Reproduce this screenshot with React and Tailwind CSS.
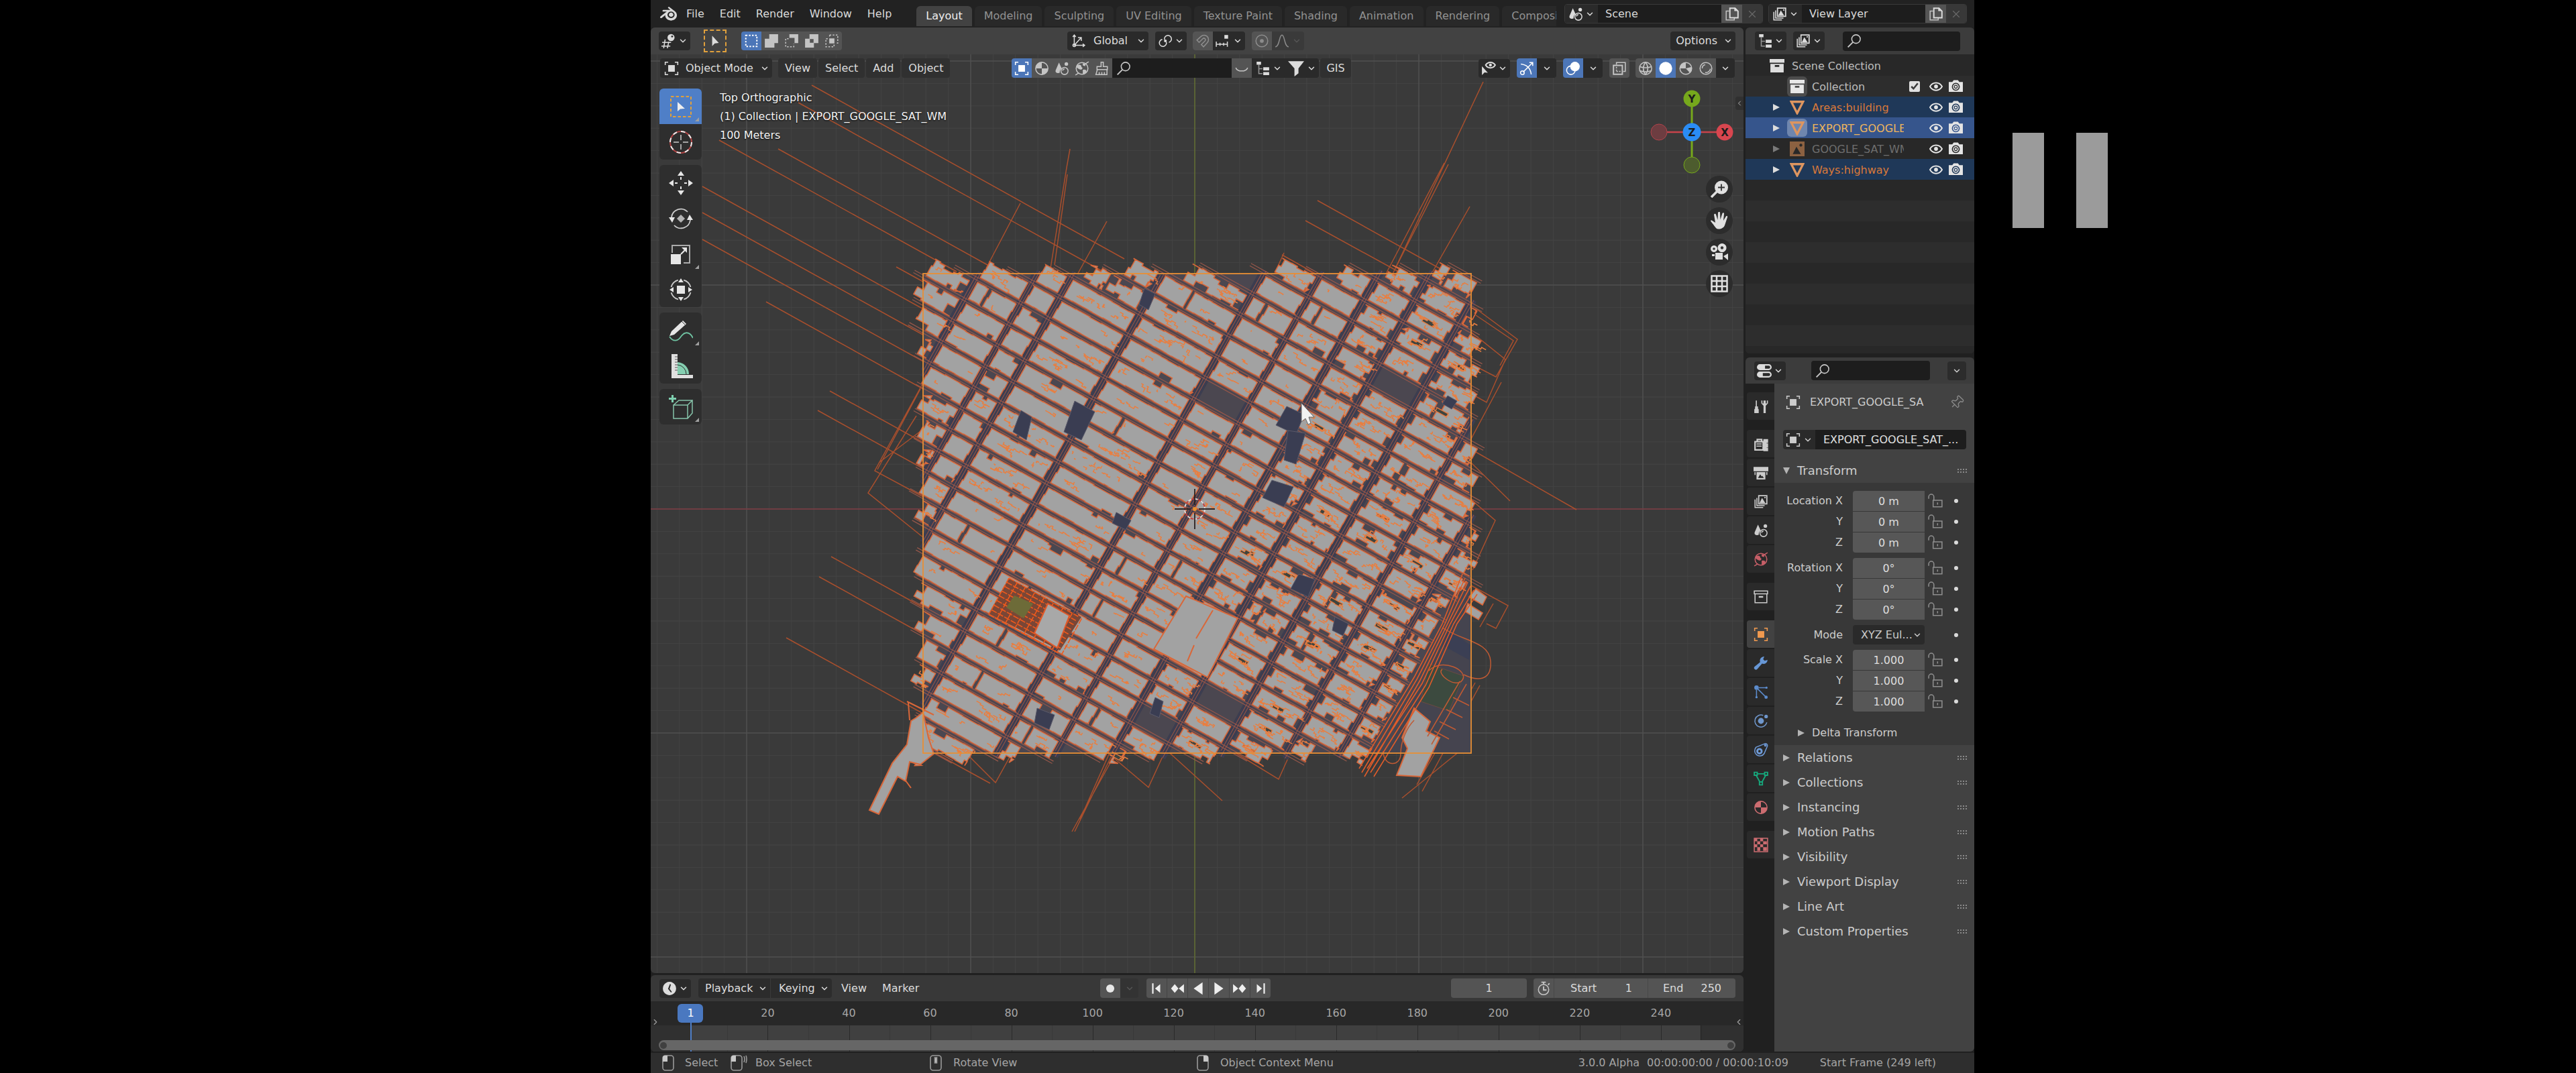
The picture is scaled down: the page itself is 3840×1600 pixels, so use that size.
import { useMemo, useState } from "react";
import { ChevronDown, ChevronLeft, ChevronRight, X, Pin } from "lucide-react";
import { SiBlender } from "react-icons/si";

const Svg = ({ size = 22, className = "", children }) => (
  <svg
    width={size}
    height={size}
    viewBox="0 0 20 20"
    fill="none"
    stroke="currentColor"
    strokeWidth="1.4"
    className={`shrink-0 ${className}`}
    aria-hidden="true"
  >
    {children}
  </svg>
);

const SOLID = { fill: "currentColor", stroke: "none" };

const icons = {
  editor3d: (
    <>
      <path d="M1 12h12M0 17h12M5 8 3 20M10 11 8 20" />
      <circle cx="13" cy="5.5" r="4.8" {...SOLID} />
      <circle cx="14.5" cy="4" r="1.3" fill="#2a2a2a" stroke="none" />
    </>
  ),
  cursorArrow: <path d="M6 3v14l3.5-3.5 5.5-.8z" {...SOLID} />,
  modeSet: <rect x="2.5" y="2.5" width="15" height="15" strokeDasharray="2.2 2" strokeWidth="1.8" />,
  modeExtend: <path d="M7 1h12v12h-5v6H1V7h6z" {...SOLID} />,
  modeSubtract: (
    <>
      <path d="M7 1h12v12h-5V6H7z" {...SOLID} />
      <path d="M6 7H2v11h11v-4" strokeDasharray="2.2 2" />
    </>
  ),
  modeInvert: <path d="M7 1h12v12h-6v6H1V7h6zM7.500 7.500v5h5v-5z" fillRule="evenodd" {...SOLID} />,
  modeIntersect: (
    <>
      <path d="M6.500 6.500h7v7h-7z" {...SOLID} />
      <path d="M7 2h11v11h-3M13 15v3H2V7h3M7 2v3" strokeDasharray="2.2 2" />
    </>
  ),
  axes: (
    <>
      <path d="M4 2v14h14M4 16 13 6M2 4.500 4 2l2 2.500M15.500 14l2.500 2-2.500 2M9 5.500h4.500V10" />
      <circle cx="4" cy="16" r="1.8" />
    </>
  ),
  pivot: (
    <>
      <path d="M9 8.500A4.800 4.800 0 1 1 15 12" />
      <path d="M11.500 11.500A4.800 4.800 0 1 1 6 8" />
      <circle cx="10.200" cy="10" r="1.9" {...SOLID} />
    </>
  ),
  magnet: <path d="M2 9 7.500 4a6 6 0 0 1 8.500 8.500L11 18l-3-3 5-5a2 2 0 0 0-3-3l-5 5z" />,
  snapIncrement: (
    <>
      <path d="M1 11v7M6 12.500v4M11 12.500v4M16 11v7M1 14.500h15" />
      <rect x="12" y="2" width="5" height="5" {...SOLID} />
    </>
  ),
  proportional: (
    <>
      <circle cx="10" cy="10" r="8" />
      <circle cx="10" cy="10" r="2.600" {...SOLID} />
    </>
  ),
  falloff: <path d="M1 18c6 0 5-16 9-16s3 16 9 16" />,
  object: (
    <>
      <rect x="5.500" y="5.500" width="9" height="9" {...SOLID} />
      <path d="M1.500 5.500v-4h4M14.500 1.500h4v4M18.500 14.500v4h-4M5.500 18.500h-4v-4" />
    </>
  ),
  material: (
    <>
      <circle cx="10" cy="10" r="8.300" />
      <path d="M10 1.700V10H1.700A8.300 8.300 0 0 1 10 1.700zM10 18.300V10h8.300A8.300 8.300 0 0 1 10 18.300z" {...SOLID} />
    </>
  ),
  scene: (
    <>
      <path d="M6 2 1.500 12.500c-1 3.500 3 4.500 5.500 3.500 0-3 1-5 2.700-6z" {...SOLID} />
      <circle cx="13.500" cy="13.500" r="4.800" />
      <path d="M11 13a2.800 2.800 0 0 1 2.500-2.300" />
      <circle cx="16" cy="4" r="2.400" {...SOLID} />
    </>
  ),
  world: (
    <>
      <circle cx="10" cy="10" r="8" />
      <path d="M3 6c3-2 6-1 6 1s2 1 1.500 3S7 12 6 11s-3-1-3.500-3zM11 12c3-1 5 0 5 2s-3 4-5 3zM11 3l4 1-1 3-3-1z" {...SOLID} />
      <path d="m14 4 5-3M6 16l-5 3" />
    </>
  ),
  brush: <path d="M8.500 1.500h3v6h5.500v4H3v-4h5.500zM3.500 11.500 1.500 18.500h15v-7M6 18v-3M9.500 18v-3M13 18v-3" />,
  search: (
    <>
      <circle cx="12.500" cy="7.500" r="5.800" />
      <path d="M8.300 11.700 1.500 18.500" strokeWidth="1.800" />
    </>
  ),
  smile: <path d="M2 9c2 6 14 6 16 0" />,
  tree: (
    <>
      <path d="M2 1h6v4H2zM11 8.500h8v4.200h-8zM11 15h8v4.200h-8z" {...SOLID} />
      <path d="M5 5v12h5M5 10.500h5" opacity=".6" />
    </>
  ),
  funnel: <path d="M0 1h20l-7 9v6l-5 4V10z" {...SOLID} />,
  visibility: (
    <>
      <path d="M6 5.500c3-5 10-5 13 0-3 5-10 5-13 0z" strokeWidth="1.800" />
      <circle cx="12.500" cy="5.500" r="2" {...SOLID} />
      <path d="M1 7v12l3.500-3.500 4.500.5z" {...SOLID} />
    </>
  ),
  gizmo: (
    <>
      <path d="M2 4c8 1 13 6 14 14M5 15 18 2M13.500 2H18v4.500" />
      <circle cx="4" cy="16" r="2.500" />
    </>
  ),
  overlays: (
    <>
      <circle cx="12.500" cy="7.500" r="6.500" {...SOLID} />
      <circle cx="7" cy="12.500" r="5.800" />
    </>
  ),
  xray: (
    <>
      <path d="M6 5V2h12v12h-3" />
      <path d="M2 6h12v12H2z" strokeWidth="1.800" />
      <path d="M6 8v7M6 14h6" strokeDasharray="2 1.5" />
    </>
  ),
  wire: (
    <>
      <circle cx="10" cy="10" r="8.300" />
      <path d="M1.700 7.500c5 2 11.600 2 16.600 0M1.700 13c5 2 11.600 2 16.600 0M10 1.700c-4 5-4 11.600 0 16.600M10 1.700c4 5 4 11.600 0 16.600" />
    </>
  ),
  solid: <circle cx="10" cy="10" r="8.800" {...SOLID} />,
  preview: (
    <>
      <circle cx="10" cy="10" r="8" />
      <path d="M10 10H2a8 8 0 0 1 8-8zM10 10l5.500 6A8 8 0 0 0 18 8z" {...SOLID} />
    </>
  ),
  rendered: (
    <>
      <circle cx="10" cy="10" r="8" />
      <path d="M5 10a5 5 0 0 1 4-5M9 15.500c3 1 7-2 7-5" />
    </>
  ),
  duplicate: (
    <>
      <path d="M6 6H2v12h11v-3" opacity=".8" />
      <path d="M7 2h7l4 4v9H7z" strokeWidth="1.800" />
      <path d="M13 1.500h1.500L18.500 6H13z" {...SOLID} />
    </>
  ),
  layers: (
    <>
      <path d="M7 2h11v11H7z" strokeWidth="1.600" />
      <path d="m8 12 3.500-7L16 12z" {...SOLID} />
      <circle cx="15.500" cy="4.500" r="1" {...SOLID} />
      <path d="M4.500 5v10.500H15M2 7v11h11" />
    </>
  ),
  collection: (
    <path d="M0 1h20v5H0zM1 7.500h18V19H1zM7 9v2.500h6V9z" fillRule="evenodd" {...SOLID} />
  ),
  collectionOutline: (
    <>
      <path d="M1 2h18v4H1zM2 6v12h16V6" />
      <path d="M7 10h6" strokeWidth="2.200" />
    </>
  ),
  mesh: <path d="M2 2.500h16L10 18z" strokeWidth="3" />,
  image: <path d="M0 0h20v20H0zM4 17h11L9 7zM15 3a2 2 0 1 0 .01 0z" fillRule="evenodd" {...SOLID} />,
  eye: (
    <>
      <path d="M1 10c4-7.500 14-7.500 18 0-4 7.500-14 7.500-18 0z" strokeWidth="2" />
      <circle cx="10" cy="10" r="2.900" {...SOLID} />
    </>
  ),
  camera: (
    <>
      <path d="M0 4h5l2-2.500h6L15 4h5v14H0zM10 5.200a5.600 5.600 0 1 0 .01 0z" fillRule="evenodd" {...SOLID} />
      <circle cx="10" cy="10.800" r="3.400" />
      <circle cx="10" cy="10.800" r="1.500" {...SOLID} />
    </>
  ),
  properties: (
    <path d="M4 1h12a4 4 0 0 1 0 8H4a4 4 0 0 1 0-8zM11 3v4h5a2 2 0 0 0 0-4zM4 11h12a4 4 0 0 1 0 8H4a4 4 0 0 1 0-8zM8 13v4h8a2 2 0 0 0 0-4z" fillRule="evenodd" {...SOLID} />
  ),
  tool: (
    <>
      <path d="M3 2h1.500v8H6v3l1 1v5H1v-5l1-1v-3h1z" {...SOLID} />
      <path d="M10.500 2v4l3 3v10h3V9l3-3V2h-1.500v4h-1.500V2h-3v4H12V2z" {...SOLID} />
    </>
  ),
  render: (
    <>
      <path d="M2 7h11v11H2zM5 7V4h6v3" strokeWidth="2" />
      <path d="M14 4h5v4h-2v2h2v4h-2v2h2v3h-5zM4 10h7M4 13h7" fill="currentColor" />
    </>
  ),
  output: (
    <>
      <path d="M0 2h20v6H0zM4 9h12v10H4zM6 17l3-5 2 3 1-1 2 3z" fillRule="evenodd" {...SOLID} />
      <path d="M2 9v4M18 9v4" />
    </>
  ),
  wrench: (
    <path d="M19 5.500a5.500 5.500 0 0 1-7.500 5L5 18a2.400 2.400 0 0 1-3.500-3.500L9 8.500A5.500 5.500 0 0 1 14.500 1L13 4.500l2 2z" {...SOLID} />
  ),
  particles: (
    <>
      <circle cx="4" cy="4" r="3" {...SOLID} />
      <path d="M7 4h10M4 7v10M6 6l11 11" />
      <circle cx="17.500" cy="4" r="1.500" {...SOLID} />
      <circle cx="4" cy="17" r="1.500" {...SOLID} />
      <circle cx="17" cy="17" r="2.200" {...SOLID} />
    </>
  ),
  physics: (
    <>
      <circle cx="10" cy="10" r="4" {...SOLID} />
      <path d="M13 2.500A8.200 8.200 0 1 0 18 12" />
      <circle cx="17" cy="4" r="2.400" {...SOLID} />
    </>
  ),
  constraint: (
    <>
      <circle cx="8" cy="12" r="3" strokeWidth="2.600" />
      <path d="M3.500 6.500 16 1.500c3 0 3 3 2.500 4L14.500 15a7 7 0 1 1-11-8.500z" />
      <circle cx="16" cy="4" r="1" />
    </>
  ),
  meshData: (
    <path d="M1 1.500h4v4H1zM15 1.500h4v4h-4zM8 14.500h4v4H8zM5 3.500h10M3.500 5.500l5 9M16.500 5.500l-5 9" strokeWidth="1.700" />
  ),
  texture: (
    <>
      <path d="M1 1h18v18H1z" />
      <path d="M1 1h4v4H1zM9 1h4v4H9zM5 5h4v4H5zM13 5h5v4h-5zM1 9h4v4H1zM9 9h4v4H9zM5 13h4v5H5zM13 13h5v5h-5z" {...SOLID} />
    </>
  ),
  lock: (
    <>
      <path d="M7 9h12v9H7z" />
      <path d="M1 7V4.500a3.500 3.500 0 0 1 7 0V9M13 12v3" />
    </>
  ),
  clock: (
    <path d="M10 1a9 9 0 1 1-.01 0zM10.500 4 8 10.500l4 5 1.200-1-3-4L12 4.500z" fillRule="evenodd" {...SOLID} />
  ),
  record: <circle cx="10" cy="10" r="5.500" {...SOLID} />,
  jumpStart: <path d="M4 3h2v14H4zM15 4v12l-7-6z" {...SOLID} />,
  prevKey: <path d="M6.500 4l5 6-5 6-5-6zM19 4v12l-7-6z" {...SOLID} />,
  playBack: <path d="M16 1.500v17L4 10z" {...SOLID} />,
  play: <path d="M4 1.500v17L16 10z" {...SOLID} />,
  nextKey: <path d="M13.500 4l5 6-5 6-5-6zM1 4v12l7-6z" {...SOLID} />,
  jumpEnd: <path d="M14 3h2v14h-2zM5 4v12l7-6z" {...SOLID} />,
  stopwatch: (
    <>
      <circle cx="10" cy="11.500" r="7" />
      <path d="M10 7v5h4M10 1v3M7 1.500h6M16 5l2-2" strokeWidth="1.700" />
    </>
  ),
};

const Icon = ({ name, size, className }) => (
  <Svg size={size} className={className}>
    {icons[name]}
  </Svg>
);

const Chevron = ({ className = "" }) => (
  <ChevronDown size={14} strokeWidth={2.5} className={`shrink-0 ${className}`} />
);

const IconDrop = ({ icon, label, className = "" }) => (
  <button
    aria-label={label}
    className={`flex h-7 w-[47px] shrink-0 items-center justify-center gap-[3px] rounded bg-[#2a2a2a] text-[#dcdcdc] ${className}`}
  >
    <Icon name={icon} />
    <Chevron />
  </button>
);

const IconCell = ({ icon, label, active, className = "" }) => (
  <button
    aria-label={label}
    className={`flex h-full w-[30px] shrink-0 items-center justify-center ${
      active ? "bg-[#4c76b8] text-white" : "bg-[#545454] text-[#c4c4c4]"
    } ${className}`}
  >
    <Icon name={icon} />
  </button>
);

const SearchBox = ({ label, className = "" }) => (
  <label className={`flex h-[29px] items-center gap-2 bg-[#1d1d1d] px-[6px] text-[#c8c8c8] ${className}`}>
    <Icon name="search" />
    <input type="search" aria-label={label} className="w-full min-w-0 bg-transparent outline-none" />
  </label>
);

/* ---------- top bar ---------- */

const menus = ["File", "Edit", "Render", "Window", "Help"];
const workspaces = [
  "Layout", "Modeling", "Sculpting", "UV Editing", "Texture Paint",
  "Shading", "Animation", "Rendering", "Compositing",
];

const DataBlock = ({ icon, value, label }) => (
  <div className="flex h-[29px] shrink-0 overflow-hidden rounded border border-[#3a3a3a]">
    <button aria-label={`Browse ${label}`} className="flex w-[49px] items-center justify-center gap-[3px] bg-[#2a2a2a]">
      <Icon name={icon} />
      <Chevron />
    </button>
    <input
      aria-label={label}
      defaultValue={value}
      className="w-[184px] bg-[#1d1d1d] px-[11px] text-[#d8d8d8] outline-none"
    />
    <button aria-label={`New ${label}`} className="flex w-[31px] items-center justify-center bg-[#545454]">
      <Icon name="duplicate" />
    </button>
    <button aria-label={`Remove ${label}`} className="flex w-[30px] items-center justify-center bg-[#383838] text-[#6a6a6a]">
      <X size={18} strokeWidth={1.5} />
    </button>
  </div>
);

const TopBar = () => {
  const [workspace, setWorkspace] = useState("Layout");

  return (
    <header className="flex h-[41px] shrink-0 items-center bg-[#222222] pr-[11px] pl-[14px] text-[#dadada]">
      <SiBlender size={25} className="shrink-0" />
      <nav className="ml-[14px] flex gap-[23px]">
        {menus.map((m) => (
          <button key={m}>{m}</button>
        ))}
      </nav>
      <div className="mr-3 ml-[37px] flex min-w-0 flex-1 items-end gap-1 self-stretch overflow-hidden pt-[9px] pb-[2px]">
        {workspaces.map((w) => (
          <button
            key={w}
            onClick={() => setWorkspace(w)}
            className={`h-full shrink-0 rounded-t-md px-[14px] ${
              w === workspace ? "bg-[#424242] text-[#eeeeee]" : "bg-[#292929] text-[#929292]"
            }`}
          >
            {w}
          </button>
        ))}
      </div>
      <div className="flex gap-2">
        <DataBlock icon="scene" value="Scene" label="scene" />
        <DataBlock icon="layers" value="View Layer" label="view layer" />
      </div>
    </header>
  );
};

/* ---------- viewport headers ---------- */

const selectModes = ["modeSet", "modeExtend", "modeSubtract", "modeInvert", "modeIntersect"];

const ToolHeader = () => (
  <div className="flex h-10 shrink-0 items-center rounded-t-md bg-[#424242] px-3 text-[#dcdcdc]">
    <IconDrop icon="editor3d" label="Editor type" />
    <button aria-label="Select tool" className="ml-[20px] flex h-[34px] w-[34px] items-center justify-center border-2 border-dashed border-[#e0a03c]">
      <Icon name="cursorArrow" />
    </button>
    <div className="ml-[22px] flex h-7 overflow-hidden rounded">
      {selectModes.map((m, i) => (
        <IconCell key={m} icon={m} label={m} active={i === 0} />
      ))}
    </div>
    <label className="ml-[336px] flex h-7 w-[121px] items-center rounded bg-[#2a2a2a] pr-1 pl-[6px]">
      <Icon name="axes" />
      <select aria-label="Transform orientation" className="ml-[11px] w-full min-w-0 appearance-none bg-transparent outline-none">
        <option>Global</option>
      </select>
      <Chevron />
    </label>
    <IconDrop icon="pivot" label="Pivot point" className="ml-[10px]" />
    <div className="ml-[9px] flex h-7 overflow-hidden rounded bg-[#2a2a2a]">
      <button aria-label="Snap" className="flex w-[30px] items-center justify-center bg-[#545454] text-[#8c8c8c]">
        <Icon name="magnet" />
      </button>
      <button aria-label="Snapping" className="flex w-12 items-center justify-center gap-1">
        <Icon name="snapIncrement" />
        <Chevron />
      </button>
    </div>
    <div className="ml-[10px] flex h-7 overflow-hidden rounded bg-[#3a3a3a] text-[#8c8c8c]">
      <button aria-label="Proportional editing" className="flex w-[30px] items-center justify-center bg-[#545454]">
        <Icon name="proportional" />
      </button>
      <button aria-label="Proportional falloff" className="flex w-12 items-center justify-center gap-1">
        <Icon name="falloff" />
        <Chevron className="text-[#555555]" />
      </button>
    </div>
    <button className="ml-auto flex h-7 w-[97px] items-center justify-end gap-[9px] rounded bg-[#2a2a2a] pr-1">
      Options
      <Chevron />
    </button>
  </div>
);

const ViewHeader = () => (
  <div className="flex h-[41px] items-center pr-[13px] pl-[14px] text-[#dcdcdc]">
    <label className="flex h-[29px] w-[167px] items-center rounded bg-[#2c2c2c] pr-1 pl-[6px]">
      <Icon name="object" />
      <select aria-label="Mode" className="ml-[10px] w-full min-w-0 appearance-none bg-transparent outline-none">
        <option>Object Mode</option>
      </select>
      <Chevron />
    </label>
    <nav className="ml-[9px] flex gap-[2px]">
      {["View", "Select", "Add", "Object"].map((m) => (
        <button key={m} className="h-[29px] rounded bg-[#303030] px-[10px]">
          {m}
        </button>
      ))}
    </nav>
    <div className="ml-[92px] flex h-[29px] overflow-hidden rounded">
      {["object", "material", "scene", "world", "brush"].map((n, i) => (
        <IconCell key={n} icon={n} label={`Filter ${n}`} active={i === 0} />
      ))}
      <SearchBox label="Filter objects" className="w-[178px]" />
      <IconCell icon="smile" label="Invert" className="text-[#8c8c8c]" />
      <button aria-label="Outliner filter" className="flex w-[50px] items-center justify-center gap-1 bg-[#2a2a2a]">
        <Icon name="tree" />
        <Chevron />
      </button>
      <button aria-label="Filter" className="flex w-[50px] items-center justify-center gap-1 bg-[#2a2a2a]">
        <Icon name="funnel" size={24} />
        <Chevron />
      </button>
    </div>
    <button className="ml-[2px] h-[29px] rounded bg-[#303030] px-[9px]">GIS</button>
    <IconDrop icon="visibility" label="Object types" className="ml-auto" />
    {["gizmo", "overlays"].map((n) => (
      <div key={n} className="ml-[10px] flex h-[29px] overflow-hidden rounded bg-[#2a2a2a]">
        <IconCell icon={n} label={n} active />
        <button aria-label={`${n} options`} className="flex w-[29px] items-center justify-center">
          <Chevron />
        </button>
      </div>
    ))}
    <div className="ml-[10px] flex h-[29px] overflow-hidden rounded">
      <IconCell icon="xray" label="X-ray" />
    </div>
    <div className="ml-[9px] flex h-[29px] overflow-hidden rounded bg-[#2a2a2a]">
      {["wire", "solid", "preview", "rendered"].map((n) => (
        <IconCell key={n} icon={n} label={n} active={n === "solid"} />
      ))}
      <button aria-label="Shading options" className="flex w-7 items-center justify-center">
        <Chevron />
      </button>
    </div>
  </div>
);

/* ---------- city drawing ---------- */

const CX = 1781;
const CY = 759;
const COS = Math.cos((29 * Math.PI) / 180);
const SIN = Math.sin((29 * Math.PI) / 180);
const BOUNDS = { x0: 1376, y0: 408, x1: 2193, y1: 1123 };
const AVENUES = [-560, -452, -376, -329, -212, -81, -5, 70, 136, 211, 296, 366, 440, 560];
const PITCH = 36;

const makeRandom = (seed) => {
  let s = seed;
  return () => {
    s = (s * 1664525 + 1013904223) % 4294967296;
    return s / 4294967296;
  };
};

const toXY = (u, v) => [CX + u * COS - v * SIN, CY + u * SIN + v * COS];

const inside = (u, v, pad) => {
  const [x, y] = toXY(u, v);
  // no houses between the river drive and the water
  if (y > 880 && x > 2184 - (y - 854) * 0.53) return false;
  return x > BOUNDS.x0 - pad && x < BOUNDS.x1 + pad && y > BOUNDS.y0 - pad && y < BOUNDS.y1 + pad;
};

const clampRange = (u0, u1, v, pad) => {
  let a = null;
  let b = null;
  for (let u = u0; u <= u1; u += 3) {
    if (inside(u, v, pad)) {
      if (a === null) a = u;
      b = u;
    }
  }
  return a === null || b - a < 9 ? null : [a, b];
};

// rectangle whose long sides step in and out
const blockPath = (u0, v0, u1, v1, rough, rnd) => {
  const top = [];
  const bottom = [];
  const shift = rough * 30;
  let u = u0;
  while (u < u1) {
    const next = Math.min(u1, u + 5 + rnd() * 15);
    const a = rnd() < rough ? rnd() * 9 : rnd();
    const b = rnd() < rough ? rnd() * 9 : rnd();
    top.push([u, v0 + a], [next, v0 + a]);
    bottom.push([u, v1 - b], [next, v1 - b]);
    u = next;
  }
  const mid = (v0 + v1) / 2 + rnd() * 6 - 3;
  const right = u1 - rnd() * shift;
  const left = u0 + rnd() * shift;
  const pts = [
    ...top,
    [u1, mid],
    [right, mid],
    [right, v1 - 1],
    ...bottom.reverse(),
    [u0, mid],
    [left, mid],
    [left, v0 + 1],
  ];
  return "M" + pts.map((p) => `${p[0].toFixed(1)} ${p[1].toFixed(1)}`).join("L") + "Z";
};

const scribble = (u, v, n, rnd) => {
  let d = `M${u.toFixed(1)} ${v.toFixed(1)}`;
  for (let i = 0; i < n; i++) {
    d += i % 2 ? `v${(rnd() * 8 - 4).toFixed(1)}` : `h${(rnd() * 10 - 2).toFixed(1)}`;
  }
  return d;
};

const buildCity = () => {
  const rnd = makeRandom(41);
  let blocks = "";
  let yards = "";
  let marks = "";
  let streets = "";
  let avenues = "";

  for (let r = -15; r <= 15; r++) {
    const v0 = r * PITCH + 5;
    const v1 = v0 + PITCH - 7;
    for (let c = 0; c < AVENUES.length - 1; c++) {
      const full = [AVENUES[c] + 5, AVENUES[c + 1] - 5];
      const range = clampRange(full[0], full[1], (v0 + v1) / 2, 1 + rnd() * 11);
      if (!range) continue;
      const mid = (range[0] + range[1]) / 2;
      const atEdge = range[0] > full[0] + 3 || range[1] < full[1] - 5;
      const rough = atEdge ? 0.4 : mid > 60 ? 0.22 : 0.06;
      const busy = mid > 60 ? 1.9 : rnd() < 0.45 ? 1.4 : 0.4;
      if (range[1] - range[0] < 70 && rnd() < 0.03) continue;
      // some blocks are cut by a lane
      const parts =
        range[1] - range[0] > 60 && rnd() < 0.2
          ? [[range[0], mid - 14], [mid - 9, range[1]]]
          : [range];
      parts.forEach(([a, b]) => {
        blocks += blockPath(a, v0, b, v1, rough, rnd);
        const count = Math.floor(((b - a) / 16) * busy);
        for (let i = 0; i < count; i++) {
          marks += scribble(a + 5 + rnd() * Math.max(1, b - a - 16), v0 + 7 + rnd() * 14, 3 + Math.floor(rnd() * 7), rnd);
        }
        if (mid > 60 && rnd() < 0.25) {
          yards += blockPath(mid - 12, v0 + 11, mid + 8, v1 - 11, 0.3, rnd);
        }
      });
    }
    const line = clampRange(-620, 620, r * PITCH, 10);
    if (line) {
      const a = line[0] - rnd() * 14;
      const b = line[1] + rnd() * 14;
      streets += `M${a} ${r * PITCH - 1}H${b}M${a} ${r * PITCH + 3}H${b}`;
    }
  }

  AVENUES.forEach((u) => {
    let a = null;
    let b = null;
    for (let v = -560; v < 560; v += 4) {
      if (inside(u, v, 0)) {
        if (a === null) a = v;
        b = v;
      }
    }
    if (a !== null) avenues += `M${u - 2} ${a}V${b}M${u + 2} ${a - 6}V${b + 8}`;
  });

  return { blocks, yards, marks, streets, avenues };
};

// roads that run out past the exported area
const roads = [
  "M1210 127L1676 386", "M1190 153L1650 408", "M1072 209L1426 405", "M1160 222L1490 405",
  "M1047 278L1400 474", "M1047 317L1390 507", "M1047 357L1380 541", "M1142 450L1385 585",
  "M1237 583L1400 673", "M1219 612L1400 712", "M1239 830L1380 908", "M1221 860L1380 948",
  "M1172 951L1376 1064", "M1336 398L1376 420",
  "M1595 222L1590 250L1566 400", "M1591 260L1572 395", "M1521 303L1470 400", "M1650 330L1600 420",
  "M2211 122L2080 400", "M2159 245L2070 420", "M2153 243L2064 412", "M2191 308L2130 415",
  "M1964 299L2160 408", "M1946 329L2090 408", "M1914 377L1890 430", "M1911 380L2000 430",
  "M2193 670L2350 760", "M2193 690L2251 747",
  "M2193 455L2262 506L2230 562L2180 536", "M2200 470L2256 508L2236 545", "M2193 495L2244 536L2216 600L2180 580",
  "M2238 570L2190 660", "M2193 745L2229 776L2195 850", "M2193 873L2248 903L2230 937L2216 930", "M2226 900L2206 935",
  "M1376 571L1304 702L1384 745", "M1372 580L1308 700", "M1366 620L1294 735L1382 806", "M1376 640L1310 690",
  "M1676 1100L1598 1240", "M1670 1100L1602 1240", "M1664 1100L1610 1222",
  "M1724 1105L1822 1194", "M1640 1113L1712 1174L1740 1113", "M1826 1113L1906 1162L1928 1113",
  "M1440 1123L1484 1167L1510 1120", "M1394 1123L1476 1168",
  "M2176 1120L2090 1190", "M2206 1022L2120 1180", "M2199 1018L2112 1170",
];

const gridLines = (pick) => {
  let d = "";
  for (let i = -60; i <= 60; i++) {
    if ((i % 10 === 0) !== pick) continue;
    d += `M${CX + i * 33.4} -400V2400M-200 ${CY + i * 33.4}H4000`;
  }
  return d;
};

const darkPatches = [
  "M1918 606l26 12-12 30-30-14z", "M1920 642l26 4-14 46-18-6z", "M1896 716l32 10-14 30-32-14z",
  "M1602 598l30 16-20 42-26-12z", "M1522 612l16 10-8 34-20-12z", "M1936 856l24 8-10 26-26-12z",
  "M1664 764l22 12-8 14-20-10z", "M1546 1056l26 10-8 22-22-10z", "M1722 1040l12 6-6 24-14-6z",
  "M1706 430l16 8-10 24-14-8z", "M2158 590l14 8-8 12-14-8z", "M1990 920l20 10-8 18-16-8z",
];

const City = () => {
  const city = useMemo(buildCity, []);
  const highway = [0, 4, 8, 12, 17, 22]
    .map((o, i) => `M${2180 + o} ${856 + i * 6}L${2150 + o} ${930}L${2108 + o} ${1010 + i * 3}L${2026 + o} ${1146 + (i % 3) * 6}`)
    .join("");
  const parkGrid = [0, 7, 14, 22, 30, 38, 46, 54, 62]
    .map((o) => `M${2 * o} 0V62M0 ${o}H118`)
    .join("");

  return (
    <svg
      className="absolute inset-0 h-full w-full"
      viewBox="970 81 1629 1370"
      preserveAspectRatio="xMidYMid slice"
      fill="none"
      aria-label="Top view of the city"
      role="img"
    >
      <path d={gridLines(false)} stroke="#444444" />
      <path d={gridLines(true)} stroke="#505050" strokeWidth="1.500" />
      <path d="M-200 759H4000" stroke="#7c3a42" strokeWidth="1.500" />
      <path d="M1781 -400V2400" stroke="#5f6b2f" strokeWidth="1.500" />

      <path d={roads.join("")} stroke="#a94f2d" strokeWidth="1.500" />
      <rect x="1376" y="408" width="817" height="715" fill="#4b4750" />

      <g transform="translate(1781 759) rotate(29)">
        <path d={city.avenues} stroke="#3c3d50" strokeWidth="9" />
        <path d={city.blocks} fill="#a2a2a2" stroke="#d96739" strokeWidth="1.600" />
        <path d={city.yards} fill="#3e443f" stroke="#e57a3f" strokeWidth="1.300" />
        <path d={city.marks} stroke="#ea7e3f" strokeWidth="1.500" />
        <path d={city.streets} stroke="#96574a" strokeWidth="1.200" />
        <path d={city.avenues} stroke="#9a5646" />
      </g>

      {darkPatches.map((d) => (
        <path key={d} d={d} fill="#3a3d52" stroke="#5b5a6a" />
      ))}

      {/* big superblock */}
      <path d="M1768 889L1845 922L1800 1010L1720 968Z" fill="#a2a2a2" stroke="#d96739" strokeWidth="2" />
      <path d="M1808 910L1783 952M1780 962L1770 986" stroke="#d96739" strokeWidth="2" />

      {/* park and library */}
      <path d="M1504 862L1612 920L1580 970L1474 915Z" fill="#7a4636" />
      <g transform="translate(1504 862) rotate(29)">
        <path d={parkGrid} stroke="#f05a1c" strokeWidth="1.600" strokeDasharray="9 2" />
      </g>
      <path d="M1512 888L1540 900L1526 922L1500 906Z" fill="#6d6b38" />
      <path d="M1562 900L1594 918L1576 966L1542 944Z" fill="#a8a8a8" stroke="#e0592a" strokeWidth="2" />

      {/* river side */}
      <path d="M2193 880L2193 1123L2066 1123L2120 1020L2160 930Z" fill="#45444f" />
      <path d="M2130 990L2182 1008L2160 1060L2118 1046Z" fill="#3c4a3f" stroke="#6a4a40" />
      <path d="M2160 940L2192 962L2190 984L2150 962Z" fill="#3b3f54" />
      <path d="M2108 1056L2132 1076L2126 1090L2146 1100L2118 1158L2082 1156L2098 1116L2090 1100Z" fill="#a2a2a2" stroke="#d96739" strokeWidth="2" />
      <path d="M2200 878L2216 890L2210 902L2190 890ZM2188 900L2210 914L2204 924L2184 912Z" fill="#a2a2a2" stroke="#d96739" strokeWidth="1.600" />
      <path d="M2186 1020L2134 1110M2176 1016L2128 1098M2166 1040L2190 1052M2156 1058L2180 1070M2146 1076L2170 1088M2138 1090L2160 1102" stroke="#c05a33" strokeWidth="1.500" />
      <path d="M2150 936c30 20 70 20 72 50s-20 30-40 20M2130 1000c20-20 60 0 50 14s-40-10-30-16M2062 1120c0 24 26 24 26 4s10-40 20-50" stroke="#c05a33" strokeWidth="1.500" />
      <path d={highway} stroke="#e05c2a" strokeWidth="1.600" />

      {/* pier */}
      <path
        d="M1376 1062L1366 1070L1358 1075L1352 1110L1330 1138L1296 1208L1310 1214L1338 1158L1350 1165L1356 1136L1372 1140L1392 1124L1384 1100Z"
        fill="#a2a2a2"
        stroke="#d96739"
        strokeWidth="2"
      />
      <path d="M1352 1046L1392 1066M1354 1048L1356 1074M1350 1164L1358 1175" stroke="#d96739" strokeWidth="2" />

      <rect x="1376" y="408" width="817" height="715" stroke="#e88f35" strokeWidth="1.800" />

      {/* 3d cursor and origin */}
      <circle cx="1781" cy="759" r="15" stroke="#dddddd" strokeWidth="1.800" strokeDasharray="5 5" />
      <circle cx="1781" cy="759" r="15" stroke="#c04040" strokeWidth="1.800" strokeDasharray="5 5" strokeDashoffset="5" />
      <path d="M1751 759H1775M1787 759H1811M1781 729V753M1781 765V789" stroke="#2c2424" strokeWidth="1.800" />
      <circle cx="1781" cy="759" r="3" fill="#e8912f" />
      {/* mouse pointer */}
      <path d="M1940 601V629L1946 624L1950 633L1954 631L1951 622H1959Z" fill="#f2f2f2" stroke="#666666" />
    </svg>
  );
};

/* ---------- toolbar ---------- */

const Corner = () => (
  <span className="absolute right-1 bottom-1 border-b-[6px] border-l-[6px] border-b-[#a0a0a0] border-l-transparent" />
);

const toolIcons = {
  select: (
    <>
      <rect x="3" y="3" width="30" height="30" stroke="#e0a03c" strokeWidth="2" strokeDasharray="4.500 3" />
      <path d="M13 11v14l4-3.500 7-.5z" fill="#eeeeee" />
    </>
  ),
  cursor: (
    <>
      <circle cx="18" cy="18" r="16" stroke="#b04444" strokeWidth="2" />
      <circle cx="18" cy="18" r="16" stroke="#eeeeee" strokeWidth="2" strokeDasharray="6.500 6" />
      <path d="M18 7v8M18 21v8M7 18h8M21 18h8" stroke="#cccccc" strokeWidth="1.500" />
    </>
  ),
  move: (
    <path d="M18 0l5 7H13zM18 36l5-7H13zM0 18l7-5v10zM36 18l-7-5v10zM17 9h2v4h-2zM17 23h2v4h-2zM9 17h4v2H9zM23 17h4v2h-4z" fill="#e6e6e6" />
  ),
  rotate: (
    <>
      <path d="M4 16A14 14 0 0 1 28 8M32 20A14 14 0 0 1 8 28" stroke="#cccccc" strokeWidth="1.800" />
      <path d="M0 16h9l-4 8zM27 20h9l-5-8z" fill="#e6e6e6" />
      <path d="M18 12l6 6-6 6-6-6z" fill="#b4b4b4" />
    </>
  ),
  scale: (
    <>
      <path d="M5 16V5h26v26H22" stroke="#aaaaaa" strokeWidth="2" />
      <path d="M3 18h15v15H3zM27 8v8l-8-8z" fill="#e6e6e6" />
      <path d="M18 18l6-6" stroke="#e6e6e6" strokeWidth="2" />
    </>
  ),
  transform: (
    <>
      <circle cx="18" cy="18" r="15" stroke="#cccccc" strokeWidth="1.800" strokeDasharray="15 8.500" strokeDashoffset="-4" />
      <path d="M12 12h12v12H12zM18 1l4 6h-8zM18 35l4-6h-8zM1 18l6-4v8zM35 18l-6-4v8z" fill="#e6e6e6" />
    </>
  ),
  annotate: (
    <>
      <path d="M1 27c6 9 13 6 17 0s12-10 18 2" stroke="#6fc3a2" strokeWidth="1.800" />
      <path d="M1 26l3-7L21 3l5 5L8 24z" fill="#e6e6e6" />
      <path d="M19 4l5 5" stroke="#303030" />
    </>
  ),
  measure: (
    <>
      <path d="M13 12a18 18 0 0 1 17 18H13z" fill="#85cfb1" />
      <path d="M13 16a14 14 0 0 1 13 14" stroke="#303030" />
      <path d="M4 0h9v31H4zM4 31h32v5H4z" fill="#e0e0e0" />
      <path d="M9 4h4M9 8h4M9 12h4M9 16h4M9 20h4M9 24h4" stroke="#555555" />
    </>
  ),
  addCube: (
    <>
      <path d="M7 15h21v20H7zM7 15l8-7h20l-7 7M35 8v19l-7 8" stroke="#86c4aa" strokeWidth="1.500" />
      <path d="M4 0h3v4h4v3H7v4H4V7H0V4h4z" fill="#7fd0b0" />
    </>
  ),
};

const toolGroups = [
  ["select", "cursor"],
  ["move", "rotate", "scale", "transform"],
  ["annotate", "measure"],
  ["addCube"],
];
const withMenu = ["select", "scale", "annotate", "addCube"];

const Toolbar = () => {
  const [tool, setTool] = useState("select");

  return (
    <div className="flex w-[63px] flex-col gap-2">
      {toolGroups.map((group) => (
        <div key={group[0]} className="flex flex-col overflow-hidden rounded-md bg-[#2e2e2e]">
          {group.map((t) => (
            <button
              key={t}
              aria-label={t}
              onClick={() => setTool(t)}
              className={`relative flex h-[53px] items-center justify-center ${t === tool ? "bg-[#4f7fc7]" : ""}`}
            >
              <svg width="36" height="36" viewBox="0 0 36 36" fill="none" aria-hidden="true">
                {toolIcons[t]}
              </svg>
              {withMenu.includes(t) && <Corner />}
            </button>
          ))}
        </div>
      ))}
    </div>
  );
};

const AxisGizmo = () => (
  <svg width="126" height="126" viewBox="0 0 126 126" fill="none" role="img" aria-label="Axis gizmo">
    <path d="M63 13V113" stroke="#76a81c" strokeWidth="3" />
    <path d="M13 63H113" stroke="#c8434b" strokeWidth="2.500" />
    <circle cx="63" cy="13" r="12.500" fill="#76a81c" />
    <circle cx="112" cy="63" r="12.500" fill="#d8464f" />
    <circle cx="14" cy="63" r="12" fill="#6d3d41" stroke="#b0434b" />
    <circle cx="63" cy="112" r="12" fill="#4d5c2e" stroke="#76a81c" />
    <circle cx="63" cy="63" r="13.500" fill="#2a8cf5" />
    <g fill="#1c1c1c" fontSize="15" fontWeight="bold" textAnchor="middle">
      <text x="63" y="19">Y</text>
      <text x="112" y="69">X</text>
      <text x="63" y="69">Z</text>
    </g>
  </svg>
);

const navIcons = {
  zoom: (
    <>
      <path d="M11 15 1 25" stroke="#e0e0e0" strokeWidth="3.500" />
      <circle cx="16" cy="10.500" r="10" fill="#e0e0e0" />
      <path d="M11 10.500h10M16 5.500v10" stroke="#333333" strokeWidth="1.800" />
    </>
  ),
  pan: (
    <path
      d="M8 24C5 20 1 15 0 13.500c0-1.500 2-1.500 3 0l4 2.500L5 4c1-2 2.500-1 3 0l2.500 8L11 1c1-1.500 3-1.500 3 0l.5 10.500L17.500 2c1-1.500 3-.5 2.500 1l-1 10 4-6.500c1.500-1 2.500 0 2 1.500L21 20c-2 5.500-10 7-13 4z"
      fill="#e0e0e0"
    />
  ),
  camera: (
    <>
      <path d="M5 3a5 5 0 1 0 .1 0zM17 0a6.500 6.500 0 1 0 .1 0zM7 14h11v10H7zM2 16h4v3H2zM19 19l7-4v10z" fill="#e0e0e0" />
      <circle cx="5" cy="8" r="1.800" fill="#333333" />
      <circle cx="17" cy="6.500" r="2.200" fill="#333333" />
    </>
  ),
  grid: <path d="M1.500 1.500h23v23h-23zM9 1v24M17 1v24M1 9h24M1 17h24" stroke="#e0e0e0" strokeWidth="2.500" />,
};

const Viewport = () => (
  <section className="relative min-h-0 flex-1 overflow-hidden rounded-b-md bg-[#3a3a3a]">
    <City />
    <div className="relative">
      <ViewHeader />
      <div className="flex items-start pt-[10px] pl-[13px]">
        <Toolbar />
        <div className="ml-[27px] text-[#f4f4f4] [text-shadow:0_1px_2px_#000]">
          <p className="leading-7">Top Orthographic</p>
          <p className="leading-7">(1) Collection | EXPORT_GOOGLE_SAT_WM</p>
          <p className="leading-7">100 Meters</p>
        </div>
        <div className="ml-auto flex flex-col items-end pt-[2px] pr-[14px]">
          <AxisGizmo />
          <div className="mt-[2px] mr-[2px] flex flex-col gap-[7px]">
            {Object.keys(navIcons).map((n) => (
              <button key={n} aria-label={n} className="flex h-10 w-10 items-center justify-center rounded-full bg-[#2c2c2c]">
                <svg width="26" height="26" viewBox="0 0 26 26" fill="none" aria-hidden="true">
                  {navIcons[n]}
                </svg>
              </button>
            ))}
          </div>
        </div>
      </div>
    </div>
    <button aria-label="Show sidebar" className="absolute top-[63px] right-0 h-5 rounded-l bg-[#303030] text-[#b0b0b0]">
      <ChevronLeft size={12} />
    </button>
  </section>
);

/* ---------- timeline ---------- */

// horizontal place of a frame, in per cent of the timeline's width
const framePos = (frame) => 3.652 + (frame - 1) * 0.3715;

const labelled = [20, 40, 60, 80, 100, 120, 140, 160, 180, 200, 220, 240];
const ticks = Array.from({ length: 24 }, (_, i) => (i + 1) * 10);

const Timeline = () => (
  <section className="relative shrink-0 overflow-hidden rounded-md bg-[#383838] text-[#dcdcdc]">
    <div className="flex h-[39px] items-center pr-3 pl-[13px]">
      <IconDrop icon="clock" label="Editor type" />
      <div className="ml-[11px] flex h-[29px] overflow-hidden rounded bg-[#2c2c2c]">
        <button className="flex w-[107px] items-center justify-between pr-1 pl-[10px]">
          Playback
          <Chevron />
        </button>
        <button className="flex w-[92px] items-center justify-between border-l border-[#3a3a3a] pr-1 pl-[12px]">
          Keying
          <Chevron />
        </button>
      </div>
      <button className="ml-[14px]">View</button>
      <button className="ml-[23px]">Marker</button>
      <div className="ml-[270px] flex h-[29px] overflow-hidden rounded bg-[#333333]">
        <IconCell icon="record" label="Auto keying" className="text-[#e8e8e8]" />
        <button aria-label="Keying options" className="flex w-[27px] items-center justify-center text-[#555555]">
          <Chevron />
        </button>
      </div>
      <div className="ml-[12px] flex h-[29px] gap-px overflow-hidden rounded bg-[#444444]">
        {["jumpStart", "prevKey", "playBack", "play", "nextKey", "jumpEnd"].map((n) => (
          <IconCell key={n} icon={n} label={n} className="text-[#eeeeee]" />
        ))}
      </div>
      <input
        aria-label="Current frame"
        defaultValue="1"
        className="ml-auto h-[29px] w-[113px] rounded bg-[#545454] text-center outline-none"
      />
      <div className="ml-[10px] flex h-[29px] gap-px overflow-hidden rounded bg-[#484848]">
        <IconCell icon="stopwatch" label="Use preview range" />
        <label className="flex w-[139px] items-center bg-[#545454] pr-[23px] pl-6">
          Start
          <input defaultValue="1" className="w-full min-w-0 bg-transparent text-right outline-none" />
        </label>
        <label className="flex w-[130px] items-center bg-[#545454] pr-[21px] pl-[22px]">
          End
          <input defaultValue="250" className="w-full min-w-0 bg-transparent text-right outline-none" />
        </label>
      </div>
    </div>
    <div className="relative h-[75px] bg-[#303030]">
      <div className="h-9 bg-[#282828]" />
      <div
        className="absolute top-9 bottom-0 border-r border-[#222222] bg-[#404040]"
        style={{ left: `${framePos(1)}%`, width: `${framePos(250) - framePos(1)}%` }}
      />
      {ticks.map((t) => (
        <span
          key={t}
          className={`absolute top-9 bottom-0 w-px ${t % 20 ? "bg-[#393939]" : "bg-[#2a2a2a]"}`}
          style={{ left: `${framePos(t)}%` }}
        />
      ))}
      {labelled.map((t) => (
        <span
          key={t}
          className="absolute top-[7px] -translate-x-1/2 text-[#a6a6a6]"
          style={{ left: `${framePos(t)}%` }}
        >
          {t}
        </span>
      ))}
      <span className="absolute top-8 bottom-0 w-[2px] bg-[#4f7fc7]" style={{ left: `${framePos(1)}%` }} />
      <span
        className="absolute top-1 flex h-7 w-[38px] -translate-x-1/2 items-center justify-center rounded-md bg-[#4a78c0] text-white"
        style={{ left: `${framePos(1)}%` }}
      >
        1
      </span>
      <div className="absolute inset-x-3 bottom-[2px] flex h-[15px] items-center justify-between rounded-full bg-[#666666] px-[2px]">
        <span className="h-[10px] w-[10px] rounded-full bg-[#404040]" />
        <span className="h-[10px] w-[10px] rounded-full bg-[#404040]" />
      </div>
      <ChevronRight size={14} className="absolute top-6 left-0 text-[#a0a0a0]" />
      <ChevronLeft size={14} className="absolute top-6 right-0 text-[#a0a0a0]" />
    </div>
  </section>
);

/* ---------- outliner ---------- */

const items = [
  { name: "Areas:building", icon: "mesh", row: "bg-[#1f3858]", text: "text-[#d9793a]" },
  { name: "EXPORT_GOOGLE_SAT_WM", icon: "mesh", row: "bg-[#36558c]", text: "text-[#efb55c]", active: true },
  { name: "GOOGLE_SAT_WM", icon: "image", row: "bg-[#282828]", text: "text-[#6e6e6e]", dim: true },
  { name: "Ways:highway", icon: "mesh", row: "bg-[#1f3858]", text: "text-[#d9793a]" },
];

const Toggles = ({ name }) => (
  <>
    <button aria-label={`Hide ${name}`} className="w-5 text-[#e4e4e4]">
      <Icon name="eye" size={20} />
    </button>
    <button aria-label={`Disable ${name} in renders`} className="mr-[17px] ml-[9px] w-[21px] text-[#e4e4e4]">
      <Icon name="camera" size={21} />
    </button>
  </>
);

const Outliner = () => (
  <section className="flex h-[486px] flex-col overflow-hidden rounded-md bg-[#282828]">
    <div className="flex h-10 shrink-0 items-center bg-[#3c3c3c] pl-[14px] text-[#dcdcdc]">
      <IconDrop icon="tree" label="Editor type" />
      <IconDrop icon="layers" label="Display mode" className="ml-[10px]" />
      <SearchBox label="Search outliner" className="mr-[21px] ml-[27px] flex-1 rounded" />
    </div>
    <ul className="pt-px text-[#bcbcbc]">
      <li className="flex h-[31px] items-center pl-9">
        <Icon name="collection" className="text-[#dedede]" />
        <span className="ml-[11px] pt-[2px]">Scene Collection</span>
      </li>
      <li className="flex h-[31px] items-center bg-[#2d2d2d] pl-[62px]">
        <span className="flex h-[30px] w-[30px] items-center justify-center rounded-md bg-[#4c4c4c] text-[#e8e8e8]">
          <Icon name="collection" />
        </span>
        <span className="ml-[7px] flex-1 pt-[2px]">Collection</span>
        <input
          type="checkbox"
          defaultChecked
          aria-label="Exclude from view layer"
          className="mr-[14px] h-4 w-4 accent-[#e0e0e0]"
        />
        <Toggles name="Collection" />
      </li>
      {items.map((item) => (
        <li key={item.name} className={`flex h-[31px] items-center pl-[41px] ${item.row}`}>
          <button
            aria-label={`Expand ${item.name}`}
            className={`border-y-[5px] border-l-[10px] border-y-transparent ${
              item.dim ? "border-l-[#7a7a7a]" : "border-l-[#dcdcdc]"
            }`}
          />
          <span
            className={`ml-[11px] flex h-[27px] w-[30px] items-center justify-center rounded-md ${
              item.active ? "bg-[#6f86ae]" : ""
            } ${item.dim ? "text-[#8c6141]" : "text-[#dd9560]"}`}
          >
            <Icon name={item.icon} />
          </span>
          <span className={`ml-[7px] w-[137px] overflow-hidden pt-[2px] whitespace-nowrap ${item.text}`}>{item.name}</span>
          <span className="flex-1" />
          <Toggles name={item.name} />
        </li>
      ))}
    </ul>
    <div className="flex-1 bg-[repeating-linear-gradient(to_bottom,#282828_0,#282828_31px,#2d2d2d_31px,#2d2d2d_62px)]" />
  </section>
);

/* ---------- properties ---------- */

const tabGroups = [
  [["tool", "text-[#cccccc]"]],
  [
    ["render", "text-[#cccccc]"],
    ["output", "text-[#cccccc]"],
    ["layers", "text-[#cccccc]"],
    ["scene", "text-[#cccccc]"],
    ["world", "text-[#c75f68]"],
  ],
  [["collectionOutline", "text-[#cccccc]"]],
  [
    ["object", "text-[#f0994f]"],
    ["wrench", "text-[#6797d6]"],
    ["particles", "text-[#5c8ccd]"],
    ["physics", "text-[#6f97cc]"],
    ["constraint", "text-[#6f9bd8]"],
    ["meshData", "text-[#16a87c]"],
    ["material", "text-[#cc6c70]"],
  ],
  [["texture", "text-[#cc6c70]"]],
];

const Grip = () => (
  <span className="mr-[11px] grid grid-cols-4 gap-[2px]">
    {Array.from({ length: 8 }, (_, i) => (
      <span key={i} className="h-[2px] w-[2px] bg-[#8a8a8a]" />
    ))}
  </span>
);

const Vector = ({ label, value }) => (
  <div className="flex flex-col gap-px">
    {["X", "Y", "Z"].map((axis, i) => {
      const id = `${label}-${axis}`;
      return (
        <div key={axis} className="flex h-[30px] items-center">
          <label htmlFor={id} className="w-[102px] text-right">
            {i === 0 ? `${label} ${axis}` : axis}
          </label>
          <input
            id={id}
            defaultValue={value}
            className={`ml-[15px] h-full w-[107px] bg-[#575757] text-center text-[#dedede] outline-none ${
              i === 0 ? "rounded-tl" : ""
            } ${i === 2 ? "rounded-bl" : ""}`}
          />
          <button aria-label={`Lock ${label} ${axis}`} className="ml-[5px] text-[#8e8e8e]">
            <Icon name="lock" />
          </button>
          <button aria-label={`Animate ${label} ${axis}`} className="ml-[17px] h-[6px] w-[6px] rounded-full bg-[#dadada]" />
        </div>
      );
    })}
  </div>
);

const sections = [
  "Relations", "Collections", "Instancing", "Motion Paths",
  "Visibility", "Viewport Display", "Line Art", "Custom Properties",
];

const ArrowRight = () => (
  <span className="border-y-[5px] border-l-[10px] border-y-transparent border-l-[#b4b4b4]" />
);

const Properties = () => {
  const [tab, setTab] = useState("object");

  return (
    <section className="flex min-h-0 flex-1 flex-col overflow-hidden rounded-md bg-[#202020] text-[#cccccc]">
      <div className="flex h-[39px] shrink-0 items-center bg-[#3c3c3c] pr-3 pl-[13px]">
        <IconDrop icon="properties" label="Editor type" />
        <SearchBox label="Search properties" className="mx-[26px] ml-[38px] flex-1 rounded" />
        <button aria-label="Options" className="flex h-7 w-7 items-center justify-center rounded bg-[#2c2c2c]">
          <Chevron />
        </button>
      </div>
      <div className="flex min-h-0 flex-1">
        <div className="flex w-[43px] shrink-0 flex-col gap-[15px] pt-[13px] pl-[2px]">
          {tabGroups.map((group) => (
            <div key={group[0][0]} className="flex flex-col gap-[2px]">
              {group.map(([name, color]) => (
                <button
                  key={name}
                  aria-label={name}
                  onClick={() => setTab(name)}
                  className={`flex h-[41px] items-center justify-center rounded-l ${color} ${
                    name === tab ? "bg-[#424242]" : "bg-[#2a2a2a]"
                  }`}
                >
                  <Icon name={name} />
                </button>
              ))}
            </div>
          ))}
        </div>
        <div className="min-w-0 flex-1 bg-[#424242]">
          <div className="flex h-14 items-center pr-[15px] pl-[17px]">
            <Icon name="object" />
            <span className="ml-[14px] w-[171px] overflow-hidden whitespace-nowrap">EXPORT_GOOGLE_SA</span>
            <button aria-label="Pin" className="ml-auto text-[#8a8a8a]">
              <Pin size={22} strokeWidth={1.5} className="rotate-45" />
            </button>
          </div>
          <div className="mt-[13px] mr-3 ml-[13px] flex h-[29px] overflow-hidden rounded">
            <button aria-label="Browse object" className="flex w-12 shrink-0 items-center justify-center gap-1 bg-[#2a2a2a]">
              <Icon name="object" />
              <Chevron />
            </button>
            <input
              aria-label="Object name"
              defaultValue="EXPORT_GOOGLE_SAT_..."
              className="w-full min-w-0 bg-[#1d1d1d] pl-3 text-[#e0e0e0] outline-none"
            />
          </div>
          <button className="mt-[14px] flex h-9 w-full items-center pl-[13px] text-left text-[18px]">
            <span className="border-x-[5px] border-t-[10px] border-x-transparent border-t-[#b4b4b4]" />
            <span className="ml-[11px] flex-1">Transform</span>
            <Grip />
          </button>
          <div className="flex flex-col gap-2 bg-[#383838] pt-3">
            <Vector label="Location" value="0 m" />
            <Vector label="Rotation" value="0°" />
            <div className="flex h-[29px] items-center">
              <label htmlFor="rotation-mode" className="w-[102px] text-right">
                Mode
              </label>
              <div className="ml-[15px] flex h-full w-[107px] items-center rounded bg-[#2a2a2a] pr-1 pl-[12px]">
                <select id="rotation-mode" className="w-full min-w-0 appearance-none bg-transparent outline-none">
                  <option>XYZ Eul...</option>
                </select>
                <Chevron />
              </div>
              <button aria-label="Animate mode" className="ml-11 h-[6px] w-[6px] rounded-full bg-[#dadada]" />
            </div>
            <Vector label="Scale" value="1.000" />
            <button className="mt-[6px] flex h-9 items-center pl-[35px]">
              <ArrowRight />
              <span className="ml-[11px]">Delta Transform</span>
            </button>
          </div>
          {sections.map((s) => (
            <button key={s} className="flex h-[37px] w-full items-center pl-[13px] text-left text-[18px]">
              <ArrowRight />
              <span className="ml-[11px] flex-1">{s}</span>
              <Grip />
            </button>
          ))}
        </div>
      </div>
    </section>
  );
};

/* ---------- status bar ---------- */

const Mouse = ({ button, drag }) => (
  <svg width={drag ? 26 : 20} height="24" viewBox={drag ? "0 0 26 24" : "0 0 20 24"} fill="none" stroke="#9a9a9a" strokeWidth="1.600" aria-hidden="true">
    <rect x="2" y="1" width="16" height="22" rx="4" />
    {button === "left" && <path d="M2 10V4q0-3 3-3h4v9z" fill="#c8c8c8" stroke="none" />}
    {button === "middle" && <rect x="8.500" y="4" width="3" height="8" fill="#c8c8c8" />}
    {button === "right" && <path d="M18 10V4q0-3-3-3h-4v9z" fill="#c8c8c8" stroke="none" />}
    {drag && <path d="M21 2q2 4 0 9M24 1q2 5 0 11" />}
  </svg>
);

const StatusBar = () => (
  <footer className="flex h-[30px] shrink-0 items-center bg-[#2e2e2e] pl-4 text-[#a4a4a4]">
    <div className="flex w-[102px] items-center gap-[15px]">
      <Mouse button="left" />
      Select
    </div>
    <div className="flex w-[297px] items-center gap-[12px]">
      <Mouse button="left" drag />
      Box Select
    </div>
    <div className="flex w-[398px] items-center gap-[16px]">
      <Mouse button="middle" />
      Rotate View
    </div>
    <div className="flex items-center gap-[16px]">
      <Mouse button="right" />
      Object Context Menu
    </div>
    <span className="ml-auto">3.0.0 Alpha</span>
    <span className="ml-[11px]">00:00:00:00 / 00:00:10:09</span>
    <span className="mr-[57px] ml-[47px]">Start Frame (249 left)</span>
  </footer>
);

const App = () => (
  <div className="grid h-screen grid-cols-[970fr_1973fr_897fr] bg-black font-['DejaVu_Sans',sans-serif] text-[16px] leading-[22px]">
    <main className="col-start-2 flex min-h-0 min-w-0 flex-col bg-[#202020]">
      <TopBar />
      <div className="flex min-h-0 flex-1 gap-[3px]">
        <div className="flex min-w-0 flex-1 flex-col">
          <ToolHeader />
          <Viewport />
          <div className="h-[3px] shrink-0" />
          <Timeline />
        </div>
        <aside className="flex w-[341px] shrink-0 flex-col gap-[6px]">
          <Outliner />
          <Properties />
        </aside>
      </div>
      <div className="h-[2px] shrink-0" />
      <StatusBar />
    </main>
    <button aria-label="Pause" className="mt-[198px] ml-[57px] flex gap-12 self-start justify-self-start">
      <span className="h-[142px] w-[47px] bg-[#9b9b9b]" />
      <span className="h-[142px] w-[47px] bg-[#9b9b9b]" />
    </button>
  </div>
);

export default App;
